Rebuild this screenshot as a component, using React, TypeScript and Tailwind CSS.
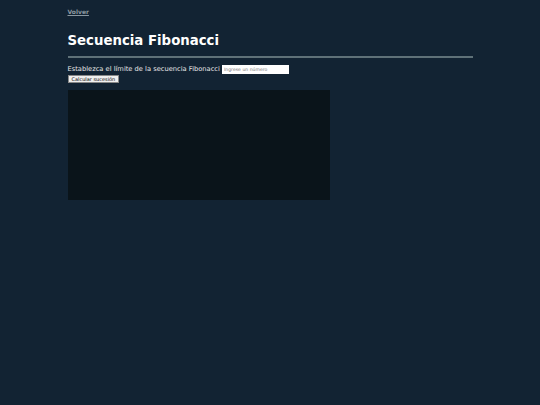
export default function App() {
  return (
    <div className="min-h-[405px] w-full bg-[#122333] font-['DejaVu_Sans',sans-serif] text-[8px] leading-[10px]">
      <div className="mx-auto w-[75%] pt-[8px]">
        <a href="#" className="block text-[6px] leading-[8px] font-bold text-[#8a97a0] underline">
          Volver
        </a>
        <h1 className="mt-[17px] text-[13.3px] font-bold leading-[16px] text-white">Secuencia Fibonacci</h1>
        <hr className="mt-[7px] border-t-2 border-[#5f7178]" />
        <div className="mt-[7px] flex items-center gap-[2px] text-[6.7px] leading-[9px] text-[#e6e6e6]">
          <span>Establezca el límite de la secuencia Fibonacci</span>
          <input
            placeholder="Ingrese un número"
            className="h-[9px] w-[67px] bg-white px-[2px] text-[4.6px] text-black placeholder:text-[#777]"
          />
        </div>
        <button className="mt-[1px] block h-[8px] border border-[#888] bg-[#efefef] px-[3px] text-[5px] leading-[6px] text-black">
          Calcular sucesión
        </button>
        <div className="mt-[7px] h-[110px] w-[262px] bg-[#0a141a]" />
      </div>
    </div>
  );
}
